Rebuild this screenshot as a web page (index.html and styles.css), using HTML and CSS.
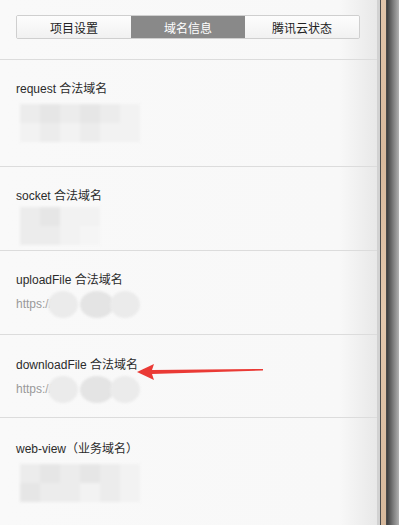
FILE: index.html
```html
<!DOCTYPE html>
<html lang="zh-CN">
<head>
  <meta charset="UTF-8">
  <meta name="viewport" content="width=device-width, initial-scale=1.0">
  <title>域名信息</title>
  <link rel="stylesheet" href="styles.css">
</head>
<body>
  <div class="window">
    <div class="panel">
      <div class="header">
        <div class="tabs">
          <div class="tab">项目设置</div>
          <div class="tab active">域名信息</div>
          <div class="tab">腾讯云状态</div>
        </div>
      </div>

      <div class="section tall">
        <div class="label">request 合法域名</div>
        <div class="mosaic wide">
          <span></span><span class="dark"></span><span></span><span class="dark"></span><span></span><span class="light"></span>
          <span class="light"></span><span></span><span class="light"></span><span></span><span class="light"></span><span class="light"></span>
        </div>
      </div>

      <div class="section">
        <div class="label">socket 合法域名</div>
        <div class="mosaic narrow">
          <span></span><span class="dark"></span><span class="light"></span><span class="light"></span>
          <span></span><span></span><span class="light"></span><span class="faint"></span>
        </div>
      </div>

      <div class="section">
        <div class="label">uploadFile 合法域名</div>
        <div class="url">
          <span class="url-text">https://</span>
          <span class="blob"></span><span class="blob dark"></span><span class="blob"></span>
        </div>
      </div>

      <div class="section short">
        <div class="label">downloadFile 合法域名</div>
        <div class="url">
          <span class="url-text">https://</span>
          <span class="blob"></span><span class="blob dark"></span><span class="blob"></span>
        </div>
      </div>

      <div class="section last">
        <div class="label">web-view（业务域名）</div>
        <div class="mosaic wide">
          <span></span><span class="dark"></span><span></span><span class="dark"></span><span></span><span class="light"></span>
          <span class="dark"></span><span></span><span></span><span class="light"></span><span></span><span class="light"></span>
        </div>
      </div>

      <!-- annotation arrow drawn over the list -->
      <svg class="arrow" width="130" height="20" viewBox="0 0 130 20">
        <path d="M0 11 L17 3 L15 9 L126 8 L126 9.5 L15 13 L17 19 Z" fill="#ea3a35"/>
      </svg>
    </div>
    <div class="frame">
      <div class="frame-gap"></div>
      <div class="frame-line"></div>
      <div class="frame-wood"></div>
      <div class="frame-line"></div>
      <div class="frame-shade"></div>
    </div>
  </div>
</body>
</html>
```

FILE: styles.css
```css
body {
  margin: 0;
  font-family: "Liberation Sans", "Noto Sans CJK SC", sans-serif;
  font-size: 12px;
  color: #2b2b2b;
  overflow: hidden;
}

.window {
  display: flex;
  height: 525px;
}

.panel {
  position: relative;
  width: 377px;
  background: linear-gradient(to right, #f9f9f9 0, #f8f8f8 340px, #e8e8e8 377px);
}

.header {
  height: 60px;
  box-sizing: border-box;
  padding: 15px 0 0 16px;
  border-bottom: 1px solid #dcdcdc;
}

.tabs {
  display: flex;
  width: 344px;
  height: 24px;
  box-sizing: border-box;
  border: 1px solid #cfcfcf;
  border-radius: 2px;
  overflow: hidden;
}

.tab {
  flex: 1;
  display: flex;
  justify-content: center;
  align-items: center;
  background: linear-gradient(#fdfdfd, #f1f1f1);
  color: #222;
}

.tab.active {
  background: #898989;
  color: #fff;
}

.section {
  height: 84px;
  box-sizing: border-box;
  padding: 21px 0 0 16px;
  border-bottom: 1px solid #dcdcdc;
}

.section.tall {
  height: 107px;
}

.section.short {
  height: 83px;
  padding-top: 22px;
}

.section.last {
  border-bottom: none;
  padding-top: 23px;
}

.label {
  line-height: 16px;
  white-space: nowrap;
}

.mosaic {
  display: grid;
  grid-template-columns: repeat(6, 20px);
  grid-auto-rows: 19px;
  margin: 7px 0 0 4px;
  filter: blur(1.5px);
}

.mosaic.narrow {
  grid-template-columns: repeat(4, 20px);
  margin-top: 3px;
}

.mosaic span {
  background: #ececec;
}

.mosaic span.dark {
  background: #e6e6e6;
}

.mosaic span.light {
  background: #f2f2f2;
}

.mosaic span.faint {
  background: #f5f5f5;
}

.url {
  display: flex;
  align-items: center;
  margin-top: 8px;
  height: 16px;
}

.url-text {
  color: #999;
}

.blob {
  width: 30px;
  height: 27px;
  margin-left: -4px;
  border-radius: 50%;
  background: #ebebeb;
  filter: blur(1px);
}

.blob:first-of-type {
  margin-left: 4px;
}

.blob.dark {
  width: 34px;
  background: #e4e4e4;
  margin-left: 2px;
}

.arrow {
  position: absolute;
  left: 137px;
  top: 361px;
}

.frame {
  display: flex;
  flex: 1;
}

.frame-gap {
  width: 3px;
  background: #d2d2d2;
}

.frame-line {
  width: 1px;
  background: #4a4a4a;
}

.frame-wood {
  width: 5px;
  background: linear-gradient(to bottom, #e2c5aa, #d8b99c 30%, #e4c8ad 60%, #d6b89b);
}

.frame-shade {
  flex: 1;
  background: linear-gradient(to right, #3e3e3e, #7a7a7a 50%, #b0b0b0);
}
```
